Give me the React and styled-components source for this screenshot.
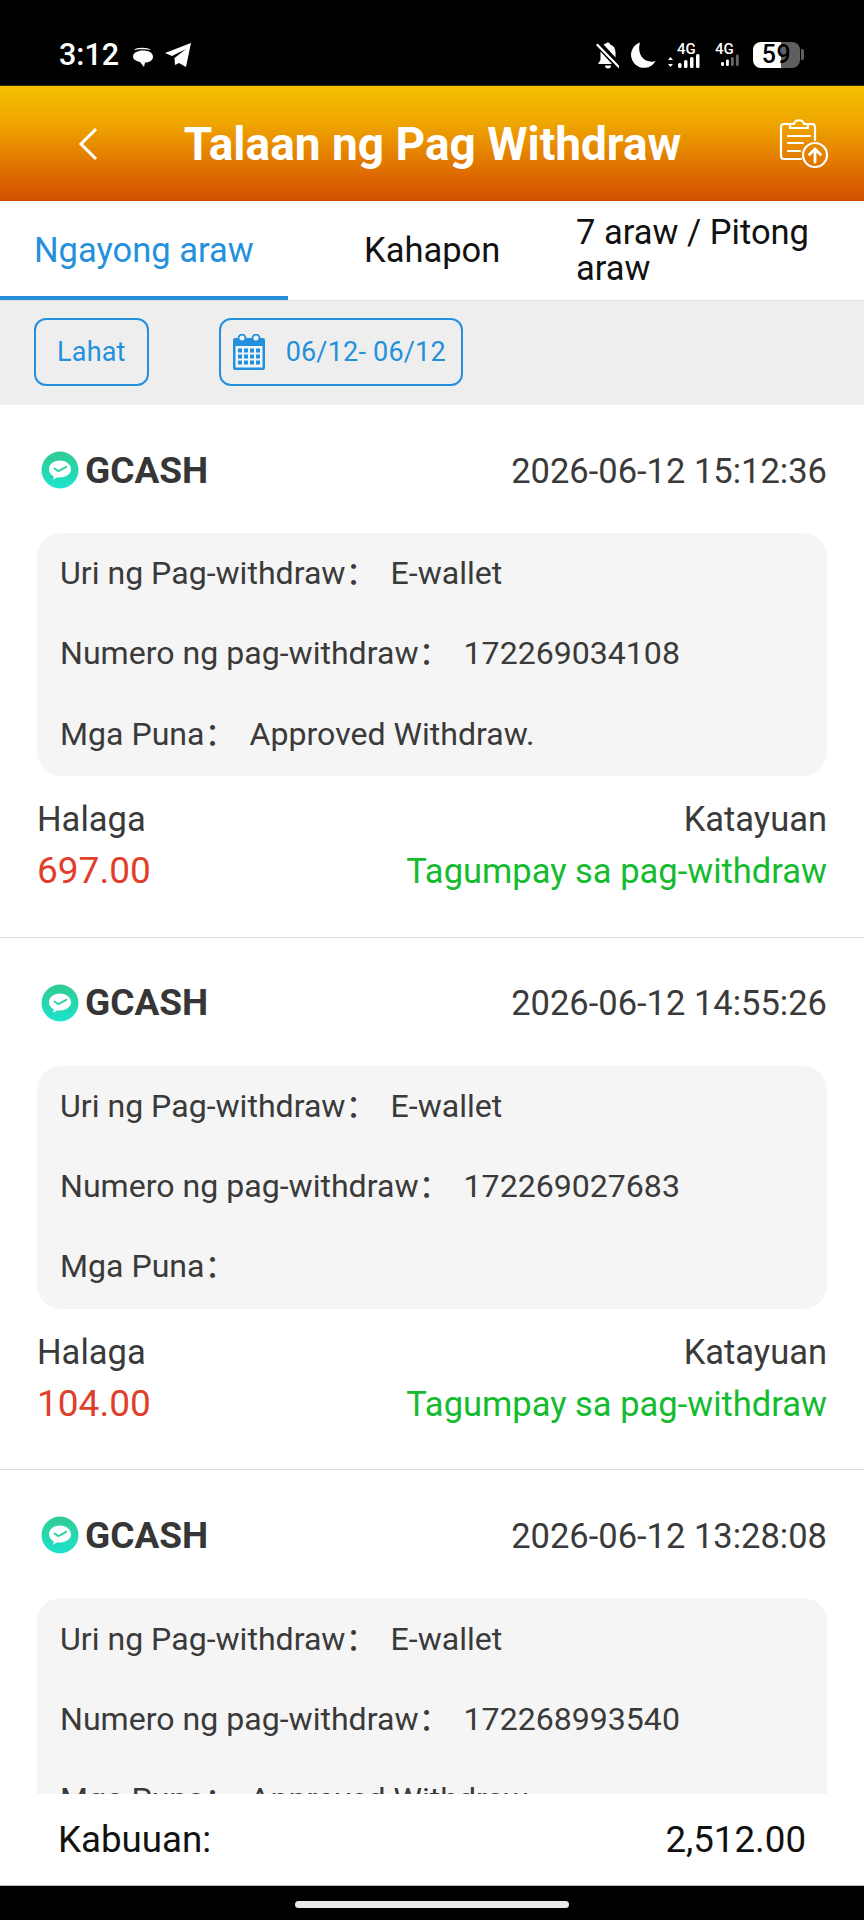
import React from 'react';
import styled, { createGlobalStyle } from 'styled-components';

const Global = createGlobalStyle`
  html, body { margin: 0; padding: 0; background: #fff; }
  * { box-sizing: border-box; }
  body { font-family: Roboto, "Noto Sans CJK SC", sans-serif; }
`;
const Page = styled.div`
  width: 864px; height: 1920px; display: flex; flex-direction: column; overflow: hidden; background: #fff;
`;
const StatusBar = styled.div`
  height: 86px; flex: none; background: #000; color: #fff; display: flex; align-items: center;
  justify-content: space-between; padding: 24px 60px 0 59px;
  border-bottom: 1px solid #3a3000;
`;
const StatusGroup = styled.div`
  display: flex; align-items: center; gap: ${p => p.$gap || 8}px;
`;
const Clock = styled.span`
  font-size: 30.5px; font-weight: 500; line-height: 30px; margin-right: 3px;
`;
const Battery = styled.div`
  position: relative; width: 47px; height: 26px; border-radius: 8px; background: #5f5f5f; overflow: hidden;
  display: flex; align-items: center; justify-content: center; color: #000; font-size: 25px; font-weight: 500;
  letter-spacing: 0.5px; margin-left: 2px;
  &::before { content: ''; position: absolute; left: 0; top: 0; bottom: 0; width: 59%; background: #fff; }
  & > span { position: relative; }
`;
const BatteryCap = styled.div`
  width: 3px; height: 11px; background: #5f5f5f; border-radius: 0 2px 2px 0; margin-left: -10px;
`;
const Header = styled.header`
  height: 115px; flex: none; display: flex; align-items: center; justify-content: space-between;
  padding: 0 34px 0 78px; color: #fff;
  background: linear-gradient(180deg, #f3bf00 0%, #f0a800 30%, #e27a00 65%, #d24f00 100%);
`;
const Title = styled.h1`
  margin: 0; font-size: 46px; font-weight: 700; line-height: 52px; flex: 1; text-align: center; padding-right: 13px;
`;
const Tabs = styled.nav`
  height: 100px; flex: none; display: grid; grid-template-columns: 288px 288px 288px; background: #fff;
  border-bottom: 1px solid #e2e2e2;
`;
const Tab = styled.div`
  display: flex; align-items: center; padding: 0 0 1px ${p => p.$pad}px; font-size: 34.5px; line-height: 36px;
  color: ${p => p.$active ? '#2490dc' : '#111'};
  ${p => p.$active ? 'box-shadow: inset 0 -4px 0 #2490dc;' : ''}
`;
const Filters = styled.div`
  height: 104px; flex: none; background: #eeeeee; display: flex; align-items: center; padding: 0 0 2px 34px; gap: 70px;
`;
const Chip = styled.div`
  height: 68px; border: 2px solid #2490dc; border-radius: 12px; display: flex; align-items: center;
  color: #2490dc; font-size: 27px; padding: 0 ${p => p.$right}px 0 ${p => p.$left}px; gap: 21px; letter-spacing: 0.2px;
`;
const List = styled.main`
  flex: 1; min-height: 0; overflow: hidden;
`;
const Card = styled.article`
  height: 532.7px; padding: 0 37px; border-bottom: 1px solid #dedede; display: flex; flex-direction: column;
`;
const CardHead = styled.div`
  height: 128px; flex: none; display: flex; align-items: center; justify-content: space-between; padding: 2px 0 0 4px;
`;
const Brand = styled.div`
  display: flex; align-items: center; gap: 6px; font-size: 37px; font-weight: 700; color: #363636;
`;
const Stamp = styled.div`
  font-size: 34.5px; color: #3a3a3a; padding-top: 1px;
`;
const Details = styled.div`
  height: 243px; flex: none; background: #f5f5f5; border-radius: 24px; padding: 0 23px;
  display: grid; grid-auto-rows: 80.3px; align-content: start;
`;
const DetailRow = styled.div`
  display: flex; align-items: center; font-size: 32.1px; line-height: 40px; color: #3a3a3a; white-space: nowrap;
`;
const DetailLabel = styled.span`
  margin-right: 13px; line-height: 40px;
`;
const DetailValue = styled.span`
  line-height: 40px;
`;
const Totals = styled.div`
  display: flex; justify-content: space-between; margin-top: 25px;
`;
const Column = styled.div`
  display: flex; flex-direction: column; align-items: ${p => p.$end ? 'flex-end' : 'flex-start'}; gap: 16px;
`;
const SmallLabel = styled.div`
  font-size: 34.5px; line-height: 36px; color: #3a3a3a;
`;
const Amount = styled.div`
  font-size: 37px; line-height: 36px; color: #e0402a;
`;
const State = styled.div`
  font-size: 34.5px; line-height: 36px; color: #14bb2e;
`;
const Footer = styled.footer`
  height: 92px; flex: none; background: #fff; display: flex; align-items: center; justify-content: space-between;
  padding: 0 58px; color: #111; font-size: 36.7px; border-bottom: 1px solid #bbb;
`;
const NavBar = styled.div`
  height: 34px; flex: none; background: #000; display: flex; align-items: center; justify-content: center; padding-top: 3px;
`;
const HomePill = styled.div`
  width: 274px; height: 7px; border-radius: 4px; background: #e9e9e9;
`;
const SignalWrap = styled.div`
  position: relative; width: ${p => p.$w}px; height: 30px; display: flex; align-items: flex-end; justify-content: flex-end;
`;
const FourG = styled.span`
  position: absolute; left: ${p => p.$left}px; top: 2px; font-size: 15px; font-weight: 500; line-height: 15px; color: #fff;
`;

const GcashIcon = () => (
  <svg width="38" height="38" viewBox="0 0 38 38">
    <defs>
      <linearGradient id="gc" x1="0" y1="0" x2="0" y2="1">
        <stop offset="0" stopColor="#31cb92" />
        <stop offset="1" stopColor="#1ce3cc" />
      </linearGradient>
    </defs>
    <circle cx="19" cy="19" r="18.500" fill="url(#gc)" />
    <path d="M19 9.500c-6.400 0-11 3.900-11 8.700 0 3 1.800 5.500 4.700 7l-.6 3.600 4.300-2.600c.8.1 1.700.2 2.600.2 6.400 0 11-3.700 11-8.200S25.400 9.500 19 9.500z" fill="#fff" />
    <path d="M13.500 17.500l3.800 2.600 8-4.300" fill="none" stroke="#2fd3a5" strokeWidth="2" strokeLinecap="round" strokeLinejoin="round" />
  </svg>
);
const CalendarIcon = () => (
  <svg width="32" height="36" viewBox="0 0 32 36">
    <path d="M2 4h28a2 2 0 0 1 2 2v28a2 2 0 0 1-2 2H2a2 2 0 0 1-2-2V6a2 2 0 0 1 2-2z" fill="#2490dc" />
    <rect x="2.500" y="12" width="27" height="21.500" fill="#eef5fb" />
    <circle cx="9" cy="4" r="3.500" fill="#eef5fb" stroke="#2490dc" strokeWidth="1.800" />
    <circle cx="23" cy="4" r="3.500" fill="#eef5fb" stroke="#2490dc" strokeWidth="1.800" />
    {[14.5, 20.5, 26.5].map(y => [5, 11, 17, 23].map(x => (
      <rect key={`${x}-${y}`} x={x} y={y} width="4" height="4" fill="#2490dc" />
    )))}
  </svg>
);
const ClipboardUpload = () => (
  <svg width="52" height="52" viewBox="0 0 52 52" fill="none" stroke="#fff" strokeWidth="2.200" strokeLinecap="round" strokeLinejoin="round">
    <path d="M12 6H6a3 3 0 0 0-3 3v29a3 3 0 0 0 3 3h17" />
    <path d="M30 6h4a3 3 0 0 1 3 3v13" />
    <path d="M12 9V6h4c1-5 9-5 10 0h4v4H12z" />
    <path d="M10 18h22M10 25h15M10 33h12" />
    <circle cx="37" cy="37" r="12" />
    <path d="M37 44V31M31.500 36.500L37 31l5.500 5.500" strokeWidth="2.800" />
  </svg>
);
const BubbleIcon = () => (
  <svg width="24" height="24" viewBox="0 -2 24 24" fill="#fff">
    <path d="M3 5c2-3 14-3 17 0-4-1-13-1-17 0z" />
    <path d="M12 5.500c5.500 0 10 2 10 6.500 0 3.500-4 5.500-8 5.500l-1 4.500-4-5C5 16 2 14.500 2 11.500c0-3.500 4.500-6 10-6z" />
  </svg>
);
const SendIcon = () => (
  <svg width="28" height="26" viewBox="0 0 28 26" fill="#fff">
    <path d="M27 1L22 25l-7-4-4 2-.5-7L22 7 8 14 1 11z" />
  </svg>
);
const BellOff = () => (
  <svg width="24" height="28" viewBox="-1 0 24 28" fill="#fff">
    <path d="M12 1.500a2 2 0 0 1 2 2c4 1 5.500 4.500 5.500 8v5l-12-13c1-.5 1.500-.8 2.500-.9a2 2 0 0 1 2-1.100z" />
    <path d="M4.500 10.500L16 23H2l2.500-4z" />
    <path d="M9 24.500h6a3 3 0 0 1-6 0z" />
    <path d="M1.500 4L23 26" stroke="#fff" strokeWidth="2.400" strokeLinecap="round" />
    <path d="M4 3l20 21.500" stroke="#000" strokeWidth="1.500" />
  </svg>
);
const Moon = () => (
  <svg width="26" height="26" viewBox="0 0 26 26" fill="#fff">
    <path d="M10 0.500A13 13 0 1 0 25.500 19C17 22 6 15 10 0.500z" />
  </svg>
);
const Signal = ({ dim, arrows }) => {
  const bars = [
    { x: 11, h: 5 }, { x: 17, h: 8 }, { x: 23, h: 11 }, { x: 29, h: 14 },
  ];
  return (
    <svg width="34" height="26" viewBox="0 0 34 26">
      {arrows && <path d="M3.500 13l2.500 3H1zM3.500 23L1 20h5z" fill="#fff" />}
      {bars.map((b, i) => (
        <rect key={b.x} x={b.x} y={24 - b.h} width="3.500" height={b.h} rx="1.500"
          fill={dim && i >= 2 ? '#666' : '#fff'} />
      ))}
    </svg>
  );
};

const entries = [
  { time: '2026-06-12 15:12:36', no: '172269034108', note: 'Approved Withdraw.', amount: '697.00' },
  { time: '2026-06-12 14:55:26', no: '172269027683', note: '', amount: '104.00' },
  { time: '2026-06-12 13:28:08', no: '172268993540', note: 'Approved Withdraw.', amount: '' },
];

export default function App() {
  return (
    <Page>
      <Global />
      <StatusBar>
        <StatusGroup $gap={9}>
          <Clock>3:12</Clock>
          <BubbleIcon />
          <SendIcon />
        </StatusGroup>
        <StatusGroup $gap={11}>
          <BellOff />
          <Moon />
          <SignalWrap $w={34}><FourG $left={10}>4G</FourG><Signal arrows /></SignalWrap>
          <SignalWrap $w={28}><FourG $left={3}>4G</FourG><Signal dim /></SignalWrap>
          <Battery><span>59</span></Battery>
          <BatteryCap />
        </StatusGroup>
      </StatusBar>
      <Header>
        <svg width="22" height="34" viewBox="0 0 22 34" fill="none" stroke="#fff" strokeWidth="3">
          <path d="M18 2L3 17l15 15" />
        </svg>
        <Title>Talaan ng Pag Withdraw</Title>
        <ClipboardUpload />
      </Header>
      <Tabs>
        <Tab $active $pad={34}>Ngayong araw</Tab>
        <Tab $pad={76}>Kahapon</Tab>
        <Tab $pad={0}>7 araw / Pitong araw</Tab>
      </Tabs>
      <Filters>
        <Chip $left={21} $right={21}>Lahat</Chip>
        <Chip $left={12} $right={15}><CalendarIcon />06/12- 06/12</Chip>
      </Filters>
      <List>
        {entries.map(e => (
          <Card key={e.time}>
            <CardHead>
              <Brand><GcashIcon />GCASH</Brand>
              <Stamp>{e.time}</Stamp>
            </CardHead>
            <Details>
              <DetailRow><DetailLabel>Uri ng Pag-withdraw：</DetailLabel><DetailValue>E-wallet</DetailValue></DetailRow>
              <DetailRow><DetailLabel>Numero ng pag-withdraw：</DetailLabel><DetailValue>{e.no}</DetailValue></DetailRow>
              <DetailRow><DetailLabel>Mga Puna：</DetailLabel><DetailValue>{e.note}</DetailValue></DetailRow>
            </Details>
            <Totals>
              <Column>
                <SmallLabel>Halaga</SmallLabel>
                <Amount>{e.amount}</Amount>
              </Column>
              <Column $end>
                <SmallLabel>Katayuan</SmallLabel>
                <State>Tagumpay sa pag-withdraw</State>
              </Column>
            </Totals>
          </Card>
        ))}
      </List>
      <Footer>
        <span>Kabuuan:</span>
        <span>2,512.00</span>
      </Footer>
      <NavBar><HomePill /></NavBar>
    </Page>
  );
}
